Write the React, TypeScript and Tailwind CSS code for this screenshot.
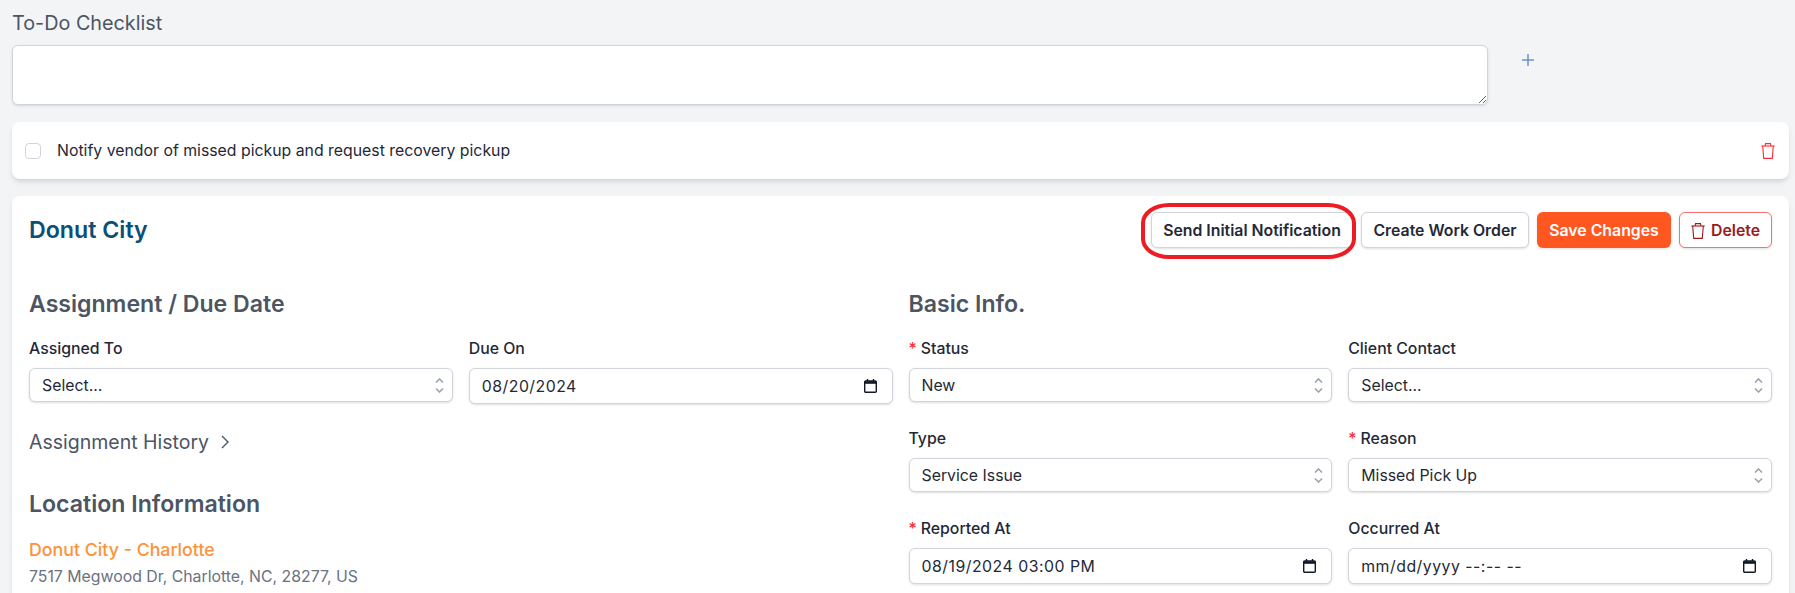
import type { ReactNode } from 'react';

function TrashIcon({ className }: { className: string }) {
  return (
    <svg className={className} viewBox="0 0 14 16" fill="none" stroke="currentColor" strokeWidth="1.1">
      <path d="M0.3 3h13.4" />
      <path d="M4 3l0.5-2.4h5L10 3" />
      <path d="M1.7 3l1 12.4h8.6l1-12.4" />
    </svg>
  );
}

function CalendarIcon() {
  return (
    <svg className="absolute right-[16px] top-[11px] h-[14px] w-[13px] text-[#111827] pointer-events-none" viewBox="0 0 13 14" fill="none">
      <path d="M3.5 0v2M9.5 0v2" stroke="currentColor" strokeWidth="1.4" />
      <rect x="0.7" y="2" width="11.6" height="11.3" rx="1" stroke="currentColor" strokeWidth="1.4" />
      <path d="M0.7 3.5h11.6" stroke="currentColor" strokeWidth="2.6" />
    </svg>
  );
}

function Label({ required, children }: { required?: boolean; children: ReactNode }) {
  return (
    <label className="block mb-[6px] text-[15.84px] leading-[26px] font-medium text-[#1f2937]">
      {required && <span className="text-red-500 mr-1">*</span>}
      {children}
    </label>
  );
}

function SelectField({ label, required, value }: { label: string; required?: boolean; value: string }) {
  return (
    <div>
      <Label required={required}>{label}</Label>
      <div className="relative">
        <select
          defaultValue={value}
          className="block w-full h-[34px] appearance-none rounded-md border border-[#d1d5db] bg-white pl-3 pr-8 pt-px text-[15.84px] text-[#1f2937] shadow-sm"
        >
          <option>{value}</option>
        </select>
        <svg className="absolute right-[9px] top-[10px] w-[9px] h-[15px] text-[#9ca3af] pointer-events-none" viewBox="0 0 9 15" fill="none" stroke="currentColor" strokeWidth="1.6">
          <path d="M1 4.5l3.5-3.5 3.5 3.5" />
          <path d="M1 10.5l3.5 3.5 3.5-3.5" />
        </svg>
      </div>
    </div>
  );
}

function DateField({ label, required, value }: { label: string; required?: boolean; value?: string }) {
  return (
    <div>
      <Label required={required}>{label}</Label>
      <div className="relative">
        <input
          type="text"
          defaultValue={value}
          placeholder="mm/dd/yyyy --:-- --"
          className="block w-full h-[36px] rounded-md border border-[#d1d5db] bg-white px-3 text-[15.84px] tracking-[0.5px] text-[#1f2937] placeholder:text-[#1f2937] shadow-sm"
        />
        <CalendarIcon />
      </div>
    </div>
  );
}

export default function App() {
  return (
    <div className="h-[593px] overflow-hidden bg-[#f3f4f6] pl-3 pr-[6px] font-['Inter',sans-serif]">
      <h2 className="pt-[9px] h-[45px] text-[19.8px] leading-7 text-[#4b5563]">To-Do Checklist</h2>

      <div className="flex items-start">
        <textarea className="block w-[1476px] h-[60px] rounded-md border border-[#d1d5db] bg-white shadow-sm" />
        <svg className="ml-[34px] mt-[9px] h-3 w-3 text-[#6b93c9]" viewBox="0 0 12 12" fill="none" stroke="currentColor" strokeWidth="1.5">
          <path d="M6 0v12M0 6h12" />
        </svg>
      </div>

      <div className="mt-[17px] flex h-[57px] items-center rounded-lg bg-white pl-[13px] pr-[14px] shadow-md">
        <input type="checkbox" className="h-4 w-4 appearance-none rounded border border-[#d1d5db] bg-white" />
        <span className="ml-4 flex-1 text-[15.84px] text-[#1f2937]">Notify vendor of missed pickup and request recovery pickup</span>
        <TrashIcon className="h-4 w-[14px] text-red-500" />
      </div>

      <div className="mt-[17px] h-[500px] rounded-lg bg-white px-[17px] pt-4 shadow-md">
        <div className="flex items-center justify-between">
          <h1 className="text-[23.2px] leading-9 font-semibold text-[#0a4f76]">Donut City</h1>
          <div className="flex gap-2">
            <div className="relative">
              <button className="h-9 w-[202px] rounded-md border border-[#d1d5db] bg-white pt-px text-[15.84px] font-semibold text-[#1f2937] shadow-sm">
                Send Initial Notification
              </button>
              <div className="absolute -left-[10px] -right-[3px] -top-[9px] -bottom-[11px] rounded-[28px/20px] border-[4px] border-[#ed1c24]" />
            </div>
            <button className="h-9 w-[168px] rounded-md border border-[#d1d5db] bg-white pt-px text-[15.84px] font-semibold text-[#1f2937] shadow-sm">
              Create Work Order
            </button>
            <button className="h-9 w-[134px] rounded-md bg-[#ff571f] pt-px text-[15.84px] font-semibold text-white shadow-sm">
              Save Changes
            </button>
            <button className="flex h-9 w-[93px] items-center justify-center gap-[6px] rounded-md border border-[#f87171] bg-white pt-px text-[15.84px] font-semibold text-[#991b1b] shadow-sm">
              <TrashIcon className="h-4 w-[14px]" />
              Delete
            </button>
          </div>
        </div>

        <div className="mt-[40px] grid grid-cols-2 gap-x-4">
          <div>
            <h3 className="mb-4 text-[23.1px] leading-8 font-semibold text-[#4b5563]">Assignment / Due Date</h3>
            <div className="grid grid-cols-2 gap-x-4">
              <SelectField label="Assigned To" value="Select..." />
              <DateField label="Due On" value="08/20/2024" />
            </div>
            <div className="mt-6 flex items-center gap-2 text-[19.5px] leading-7 text-[#4b5563]">
              Assignment History
              <svg className="h-4 w-4" viewBox="0 0 16 16" fill="none" stroke="currentColor" strokeWidth="1.4">
                <path d="M5 2l6 6-6 6" />
              </svg>
            </div>
            <h3 className="mt-[32px] text-[23.1px] leading-8 font-semibold text-[#4b5563]">Location Information</h3>
            <div className="mt-[16px] text-[17.8px] leading-7 font-medium text-[#fb923c]">Donut City - Charlotte</div>
            <div className="pt-px text-[15.84px] leading-6 text-[#6b7280]">7517 Megwood Dr, Charlotte, NC, 28277, US</div>
          </div>

          <div>
            <h3 className="mb-4 text-[23.1px] leading-8 font-semibold text-[#4b5563]">Basic Info.</h3>
            <div className="grid grid-cols-2 gap-x-4 gap-y-6">
              <SelectField label="Status" required value="New" />
              <SelectField label="Client Contact" value="Select..." />
              <SelectField label="Type" value="Service Issue" />
              <SelectField label="Reason" required value="Missed Pick Up" />
              <DateField label="Reported At" required value="08/19/2024 03:00 PM" />
              <DateField label="Occurred At" />
            </div>
          </div>
        </div>
      </div>
    </div>
  );
}
